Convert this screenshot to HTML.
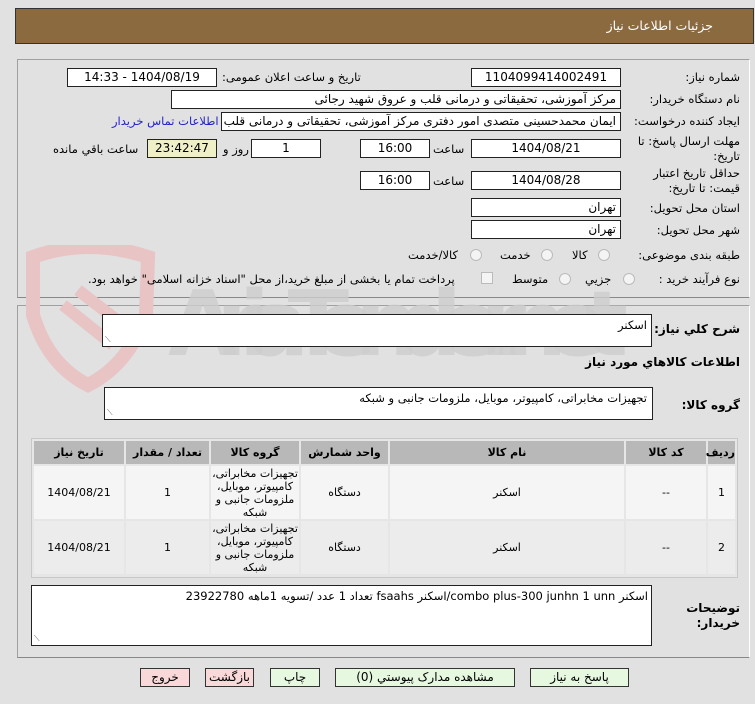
<!DOCTYPE html>
<html><head><meta charset="utf-8"><style>
*{margin:0;padding:0;box-sizing:border-box}
body{width:755px;height:704px;background:#e1e1e1;font-family:"DejaVu Sans","Liberation Sans",sans-serif;font-size:11.5px;color:#000;position:relative;overflow:hidden}
.a{position:absolute;white-space:nowrap}
.hdr{left:15px;top:8px;width:739px;height:36px;background:#8b6a40;border:1px solid #333}
.pan{border:1px solid #a0a0a0;border-right-color:#fff;border-bottom-color:#888}
.in{position:absolute;background:#fff;border:1px solid #222;height:19px;line-height:17px;font-size:12px;padding:0 4px;direction:rtl;white-space:nowrap;overflow:hidden}
.c{text-align:center}
.l{direction:rtl;text-align:right}
.rad{position:absolute;width:12px;height:12px;border-radius:50%;border:1px solid #bbb;background:#f4f4f4}
.ta{position:absolute;background:#fff;border:1px solid #222}
.grip{position:absolute;left:2px;bottom:1px;font-size:8px;color:#666}
table{border-collapse:separate;border-spacing:2px;font-size:11px;table-layout:fixed;white-space:normal}
td,th{text-align:center;white-space:normal}
th{background:#b8b8b8;height:23px;font-weight:bold}
td{background:#f5f5f5;height:53px;line-height:13px}
tr.r2 td{background:#ececec}
.btn{position:absolute;top:668px;height:19px;border:1px solid #333;font-size:12px;text-align:center;line-height:17px}
.g{background:#e6f8e0}.p{background:#f8d8d8}
</style></head><body>
<div class="a hdr"></div>
<div class="a" style="right:42px;top:18px;color:#fff;font-size:12.5px">جزئیات اطلاعات نیاز</div>

<div class="a pan" style="left:17px;top:59px;width:733px;height:239px"></div>
<div class="a pan" style="left:17px;top:305px;width:733px;height:353px"></div>

<svg class="a" style="left:18px;top:245px" width="620" height="150">
<path d="M15 12 Q70 -8 130 12 L128 70 Q110 120 70 140 Q30 120 15 70 Z" fill="none" stroke="#e8c4c4" stroke-width="14"/>
<path d="M45 60 L95 100 M60 45 L105 80" stroke="#e8c4c4" stroke-width="12"/>
<text x="150" y="110" font-family="DejaVu Sans" font-size="90" font-weight="bold" fill="#cdcdcd" fill-opacity="0.8" textLength="460">AriaTender.net</text>
</svg>

<div class="a l" style="right:15px;top:70px">شماره نیاز:</div>
<div class="in c" style="left:471px;top:68px;width:150px">1104099414002491</div>
<div class="a l" style="left:222px;top:70px">تاریخ و ساعت اعلان عمومی:</div>
<div class="in c" style="left:67px;top:68px;width:150px">1404/08/19 - 14:33</div>

<div class="a l" style="right:15px;top:92px">نام دستگاه خریدار:</div>
<div class="in" style="left:171px;top:90px;width:450px">مرکز آموزشی، تحقیقاتی و درمانی قلب و عروق شهید رجائی</div>

<div class="a l" style="right:15px;top:114px">ایجاد کننده درخواست:</div>
<div class="in" style="left:221px;top:112px;width:400px">ایمان محمدحسینی متصدی امور دفتری مرکز آموزشی، تحقیقاتی و درمانی قلب</div>
<div class="a" style="left:112px;top:114px;color:#2222cc">اطلاعات تماس خریدار</div>

<div class="a l" style="right:15px;top:134px;line-height:15px;text-align:right">مهلت ارسال پاسخ: تا<br>تاریخ:</div>
<div class="in c" style="left:471px;top:139px;width:150px">1404/08/21</div>
<div class="a" style="left:433px;top:142px">ساعت</div>
<div class="in c" style="left:360px;top:139px;width:70px">16:00</div>
<div class="in c" style="left:251px;top:139px;width:70px">1</div>
<div class="a" style="left:223px;top:142px">روز و</div>
<div class="in c" style="left:147px;top:139px;width:70px;background:#f0f0c8">23:42:47</div>
<div class="a" style="left:53px;top:142px">ساعت باقي مانده</div>

<div class="a l" style="right:15px;top:166px;line-height:15px">حداقل تاریخ اعتبار<br>قیمت: تا تاریخ:</div>
<div class="in c" style="left:471px;top:171px;width:150px">1404/08/28</div>
<div class="a" style="left:433px;top:174px">ساعت</div>
<div class="in c" style="left:360px;top:171px;width:70px">16:00</div>

<div class="a l" style="right:15px;top:201px">استان محل تحویل:</div>
<div class="in" style="left:471px;top:198px;width:150px">تهران</div>
<div class="a l" style="right:15px;top:223px">شهر محل تحویل:</div>
<div class="in" style="left:471px;top:220px;width:150px">تهران</div>

<div class="a l" style="right:15px;top:248px">طبقه بندی موضوعی:</div>
<div class="rad" style="left:598px;top:249px"></div><div class="a" style="left:572px;top:248px">کالا</div>
<div class="rad" style="left:541px;top:249px"></div><div class="a" style="left:500px;top:248px">خدمت</div>
<div class="rad" style="left:470px;top:249px"></div><div class="a" style="left:408px;top:248px">کالا/خدمت</div>

<div class="a l" style="right:15px;top:272px">نوع فرآیند خرید :</div>
<div class="rad" style="left:623px;top:273px"></div><div class="a" style="left:585px;top:272px">جزیي</div>
<div class="rad" style="left:559px;top:273px"></div><div class="a" style="left:512px;top:272px">متوسط</div>
<div class="a" style="left:481px;top:272px;width:12px;height:12px;border:1px solid #bbb;background:#f4f4f4"></div>
<div class="a" style="left:88px;top:272px;direction:rtl">پرداخت تمام یا بخشی از مبلغ خرید،از محل "اسناد خزانه اسلامی" خواهد بود.</div>

<div class="a l" style="right:15px;top:322px;font-weight:bold;font-size:12px">شرح کلي نیاز:</div>
<div class="ta" style="left:102px;top:314px;width:550px;height:33px"><div class="a" style="right:4px;top:3px">اسکنر</div><div class="grip">⟍</div></div>
<div class="a l" style="right:15px;top:355px;font-weight:bold;font-size:12px">اطلاعات کالاهاي مورد نیاز</div>
<div class="a l" style="right:15px;top:398px;font-weight:bold;font-size:12px">گروه کالا:</div>
<div class="ta" style="left:104px;top:387px;width:549px;height:33px"><div class="a" style="right:5px;top:3px">تجهیزات مخابراتی، کامپیوتر، موبایل، ملزومات جانبی و شبکه</div><div class="grip">⟍</div></div>

<div style="position:absolute;left:31px;top:438px;width:707px;height:140px;border:1px solid #c8c8c8;background:#e6e6e6">
<table dir="rtl" style="width:705px">
<colgroup><col style="width:27px"><col style="width:80px"><col style="width:234px"><col style="width:87px"><col style="width:88px"><col style="width:83px"><col></colgroup>
<tr><th>ردیف</th><th>کد کالا</th><th>نام کالا</th><th>واحد شمارش</th><th>گروه کالا</th><th>تعداد / مقدار</th><th>تاریخ نیاز</th></tr>
<tr><td>1</td><td>--</td><td>اسکنر</td><td>دستگاه</td><td>تجهیزات مخابراتی، کامپیوتر، موبایل، ملزومات جانبی و شبکه</td><td>1</td><td>1404/08/21</td></tr>
<tr class="r2"><td>2</td><td>--</td><td>اسکنر</td><td>دستگاه</td><td>تجهیزات مخابراتی، کامپیوتر، موبایل، ملزومات جانبی و شبکه</td><td>1</td><td>1404/08/21</td></tr>
</table></div>

<div class="a l" style="right:15px;top:601px;font-weight:bold;font-size:12px;line-height:15px">توضیحات<br>خریدار:</div>
<div class="ta" style="left:31px;top:585px;width:621px;height:61px"><div class="a" style="right:3px;top:3px;direction:rtl">اسکنر combo plus-300 junhn 1 unn/اسکنر fsaahs تعداد 1 عدد /تسویه 1ماهه 23922780</div><div class="grip">⟍</div></div>

<div class="btn p" style="left:140px;width:50px">خروج</div>
<div class="btn p" style="left:205px;width:49px">بازگشت</div>
<div class="btn g" style="left:270px;width:50px">چاپ</div>
<div class="btn g" style="left:335px;width:180px">مشاهده مدارک پیوستي (0)</div>
<div class="btn g" style="left:530px;width:99px">پاسخ به نیاز</div>
</body></html>
